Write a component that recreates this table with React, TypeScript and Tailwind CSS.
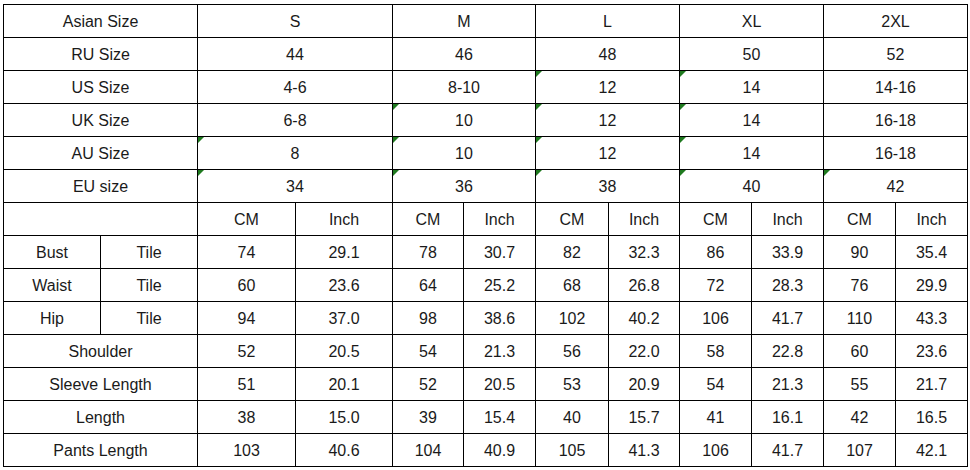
import React from "react";

type Cell = { text: string; span?: number; tri?: boolean };

const sizes = ["S", "M", "L", "XL", "2XL"];

const convRows: { label: string; vals: string[]; tri: boolean[] }[] = [
  { label: "Asian Size", vals: sizes, tri: [false, false, false, false, false] },
  { label: "RU Size", vals: ["44", "46", "48", "50", "52"], tri: [false, false, false, false, false] },
  { label: "US Size", vals: ["4-6", "8-10", "12", "14", "14-16"], tri: [false, false, true, true, false] },
  { label: "UK Size", vals: ["6-8", "10", "12", "14", "16-18"], tri: [false, true, true, true, false] },
  { label: "AU Size", vals: ["8", "10", "12", "14", "16-18"], tri: [true, true, true, true, false] },
  { label: "EU size", vals: ["34", "36", "38", "40", "42"], tri: [true, true, true, true, true] },
];

const measureRows: { label: string; sub?: string; vals: string[] }[] = [
  { label: "Bust", sub: "Tile", vals: ["74", "29.1", "78", "30.7", "82", "32.3", "86", "33.9", "90", "35.4"] },
  { label: "Waist", sub: "Tile", vals: ["60", "23.6", "64", "25.2", "68", "26.8", "72", "28.3", "76", "29.9"] },
  { label: "Hip", sub: "Tile", vals: ["94", "37.0", "98", "38.6", "102", "40.2", "106", "41.7", "110", "43.3"] },
  { label: "Shoulder", vals: ["52", "20.5", "54", "21.3", "56", "22.0", "58", "22.8", "60", "23.6"] },
  { label: "Sleeve Length", vals: ["51", "20.1", "52", "20.5", "53", "20.9", "54", "21.3", "55", "21.7"] },
  { label: "Length", vals: ["38", "15.0", "39", "15.4", "40", "15.7", "41", "16.1", "42", "16.5"] },
  { label: "Pants Length", vals: ["103", "40.6", "104", "40.9", "105", "41.3", "106", "41.7", "107", "42.1"] },
];

function C({ text, span, tri }: Cell) {
  return (
    <div
      className={`relative bg-white flex items-center justify-center pt-[2px] text-[16px] text-[#1a1a1a] ${
        span === 2 ? "col-span-2" : ""
      }`}
    >
      {tri && (
        <span className="absolute top-0 left-0 w-0 h-0 border-t-[6px] border-r-[6px] border-t-[#1f7a1f] border-r-transparent" />
      )}
      <span className="leading-none">{text}</span>
    </div>
  );
}

export default function App() {
  const cells: React.ReactNode[] = [];
  convRows.forEach((r, i) => {
    cells.push(<C key={`c${i}l`} text={r.label} span={2} />);
    r.vals.forEach((v, j) => cells.push(<C key={`c${i}-${j}`} text={v} span={2} tri={r.tri[j]} />));
  });
  cells.push(<C key="hdr-empty" text="" span={2} />);
  sizes.forEach((s) => {
    cells.push(<C key={`h${s}cm`} text="CM" />);
    cells.push(<C key={`h${s}in`} text="Inch" />);
  });
  measureRows.forEach((r, i) => {
    if (r.sub) {
      cells.push(<C key={`m${i}l`} text={r.label} />);
      cells.push(<C key={`m${i}s`} text={r.sub} />);
    } else {
      cells.push(<C key={`m${i}l`} text={r.label} span={2} />);
    }
    r.vals.forEach((v, j) => cells.push(<C key={`m${i}-${j}`} text={v} />));
  });

  return (
    <div
      className="w-[970px] h-[470px] bg-white pl-[3px] pt-[4px] overflow-hidden"
      style={{ fontFamily: '"Liberation Sans", Arial, sans-serif' }}
    >
      <div className="inline-grid bg-black p-px gap-px grid-cols-[96px_96px_97px_96px_70px_71px_72px_70px_71px_71px_71px_71px] grid-rows-[repeat(14,32px)]">
        {cells}
      </div>
    </div>
  );
}
